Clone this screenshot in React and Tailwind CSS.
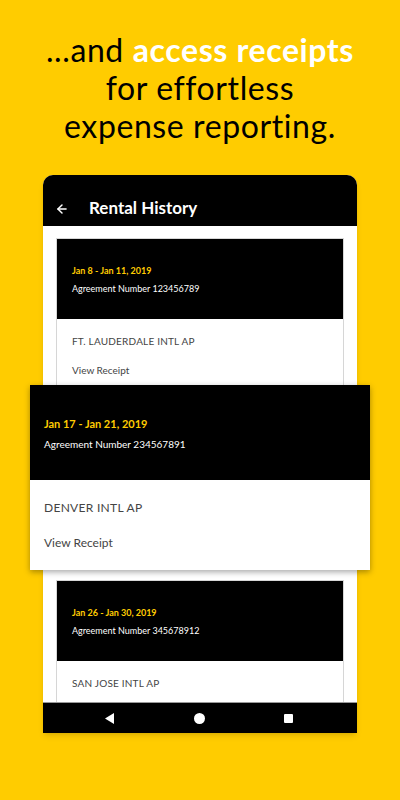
import React from 'react';
import { ArrowLeft } from 'lucide-react';

const rentals = [
  { dates: 'Jan 8 - Jan 11, 2019', number: '123456789', place: 'FT. LAUDERDALE INTL AP' },
  { dates: 'Jan 17 - Jan 21, 2019', number: '234567891', place: 'DENVER INTL AP' },
  { dates: 'Jan 26 - Jan 30, 2019', number: '345678912', place: 'SAN JOSE INTL AP' },
];

const RentalCard = ({ rental, hidden }) => (
  <div className={hidden ? 'invisible border border-[#d6d6d6] bg-white' : 'border border-[#d6d6d6] bg-white'}>
    <div className="flex h-[80px] flex-col justify-center bg-black pl-[15px] pt-[2px]">
      <div className="text-[9px] font-bold leading-[14px] text-[#ffcc00]">{rental.dates}</div>
      <div className="mt-[4px] text-[9px] leading-[14px] text-white">Agreement Number {rental.number}</div>
    </div>
    <div className="h-[77px] pl-[15px] pt-[15px] text-[#444]">
      <div className="text-[10px] leading-[14px] tracking-[0.2px]">{rental.place}</div>
      <div className="mt-[15px] text-[10px] leading-[14px]">View Receipt</div>
    </div>
  </div>
);

const App = () => {
  const featured = rentals[1];

  return (
    <div className="relative h-[800px] w-[400px] overflow-hidden bg-[#ffcc00] font-['Lato',sans-serif]">
      <h1 className="pt-[31px] text-center text-[32px] font-normal leading-[38px] tracking-[0.6px] text-black">
        ...and <span className="font-bold text-white">access receipts</span>
        <br />
        for effortless
        <br />
        expense reporting.
      </h1>

      <div className="mx-auto mt-[30px] w-[314px] overflow-hidden rounded-t-[10px] bg-white shadow-md">
        <div className="flex h-[51px] items-end bg-black pb-[7px]">
          <ArrowLeft className="ml-[12px] mb-[3px] text-white" size={14} strokeWidth={2.5} />
          <span className="ml-[20px] text-[17px] font-bold leading-[22px] text-white">Rental History</span>
        </div>

        <div className="flex h-[476px] flex-col gap-[12px] overflow-hidden px-[13px] pt-[12px]">
          {rentals.map((r, i) => (
            <RentalCard key={r.number} rental={r} hidden={i === 1} />
          ))}
        </div>

        <div className="flex h-[31px] items-center justify-between border-t border-[#999] bg-black pl-[62px] pr-[64px]">
          <svg width="10" height="11" viewBox="0 0 10 11">
            <polygon points="9,0 9,11 0,5.5" fill="white" />
          </svg>
          <div className="h-[11px] w-[11px] rounded-full bg-white" />
          <div className="h-[9px] w-[9px] rounded-[1px] bg-white" />
        </div>
      </div>

      {/* enlarged card floating over the list */}
      <div className="absolute left-[30px] top-[385px] w-[340px] bg-white shadow-[0_2px_6px_rgba(0,0,0,0.35)]">
        <div className="flex h-[95px] flex-col justify-center bg-black pl-[14px] pt-[2px]">
          <div className="text-[11px] font-bold leading-[16px] text-[#ffcc00]">{featured.dates}</div>
          <div className="mt-[5px] text-[10px] leading-[15px] text-white">Agreement Number {featured.number}</div>
        </div>
        <div className="h-[90px] pl-[14px] pt-[19px] text-[#444]">
          <div className="text-[12px] leading-[18px] tracking-[0.3px]">{featured.place}</div>
          <div className="mt-[17px] text-[12px] leading-[18px]">View Receipt</div>
        </div>
      </div>
    </div>
  );
};

export default App;
